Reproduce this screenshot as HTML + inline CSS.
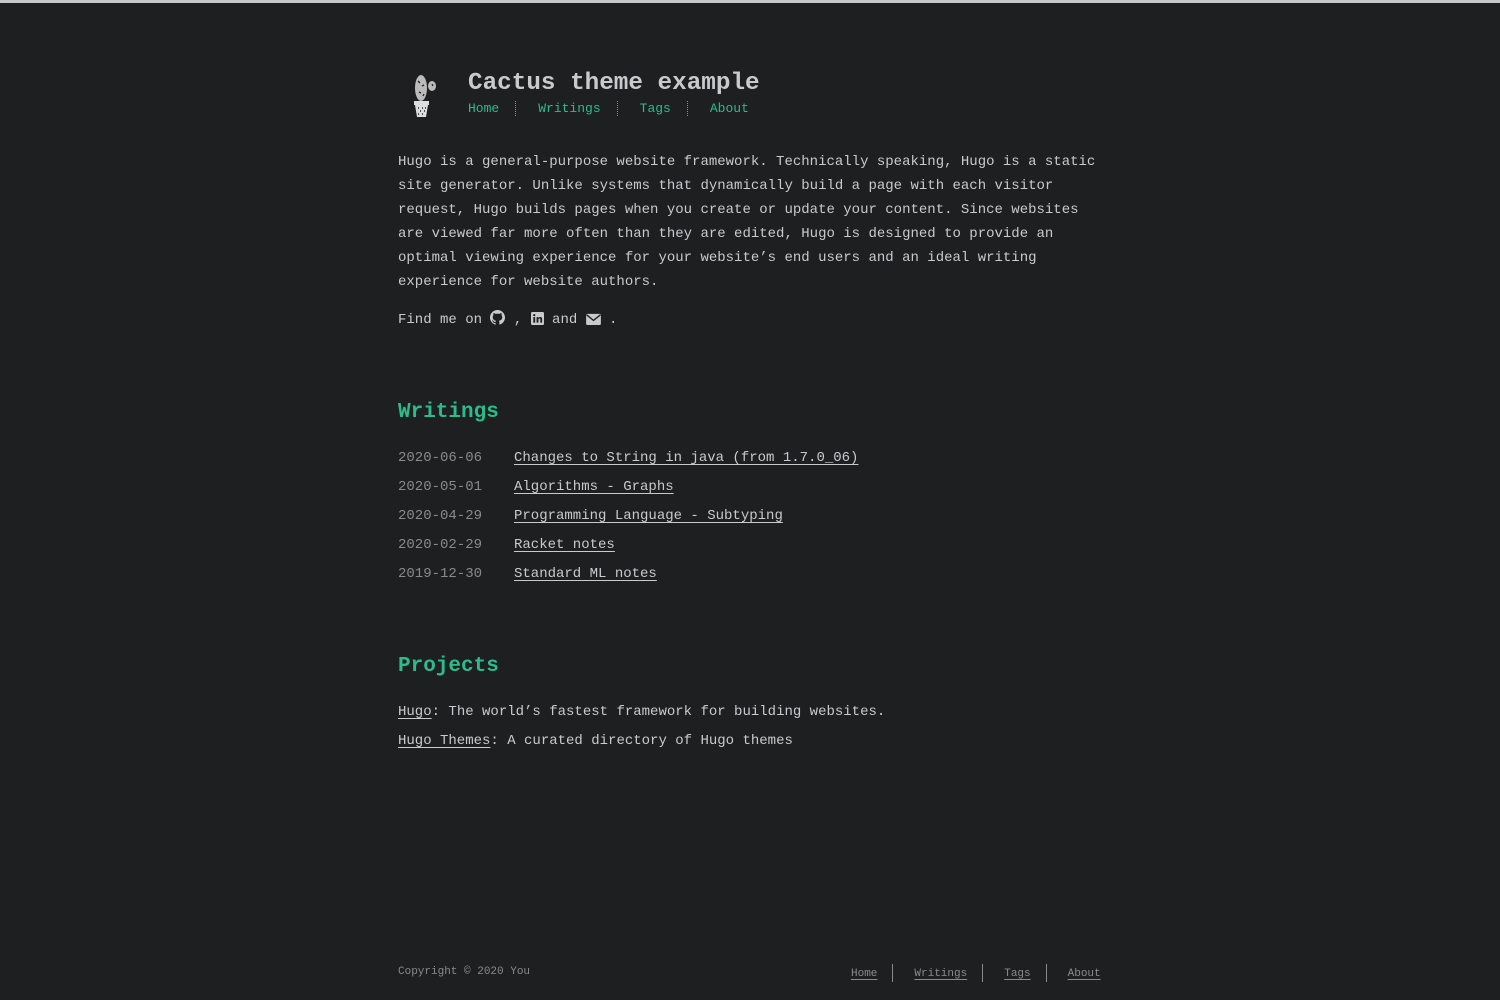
<!DOCTYPE html>
<html><head><meta charset="utf-8"><style>
*{margin:0;padding:0;box-sizing:border-box}
html,body{width:1500px;height:1000px;background:#1d1f21;overflow:hidden}
body{font-family:"Liberation Mono",monospace;color:#c9cacc;font-size:14px;position:relative;border-top:3px solid #c8c8c8}
a{color:#c9cacc;text-decoration:underline;text-underline-offset:3px}
.abs{position:absolute}
.title{left:468px;top:65px;font-size:24.3px;font-weight:bold;color:#c9cacc;line-height:32px}
.nav{left:468px;top:96px;font-size:13px;color:#2bbc8a;line-height:20px;white-space:pre}
.nav span.sep{display:inline-block;border-left:1px dotted #2bbc8a;height:15px;vertical-align:middle;margin:0 22px 0 16px}
.intro{left:398px;top:147px;width:705px;line-height:24px}
.find{left:398px;top:305px;line-height:24px}
h2{position:absolute;left:398px;font-size:21px;font-weight:bold;color:#2bbc8a;line-height:30px}
.list{left:398px;top:441px;line-height:29px}
.list .d{display:inline-block;width:116px;color:#8a8a8a}
.proj{left:398px;top:695px;line-height:29px}
.foot{font-size:11px;color:#8a8a8a}
.foot a{color:#8a8a8a}
.fnav span{display:inline-block;border-left:1px solid #8a8a8a;height:18px;vertical-align:middle;margin:0 21px 0 15px}
svg{vertical-align:-2px}
</style></head><body>
<svg class="abs" style="left:410px;top:68px" width="30" height="48" viewBox="0 0 30 48">
<ellipse cx="11" cy="17" rx="6" ry="13" fill="#bbb"/>
<ellipse cx="22" cy="15" rx="4" ry="5" fill="#bbb"/>
<path d="M8 10l2 2M12 15l2-1M9 21l2 1M13 25l1-2M22 13l1 2" stroke="#222" stroke-width="1.3"/>
<rect x="4" y="30" width="15" height="4" fill="#ddd"/>
<path d="M5 34h13l-2 12H7z" fill="#ddd"/>
<path d="M8 37h1M12 37h1M15 37h1M10 40h1M14 40h1M8 43h1M12 43h1" stroke="#222" stroke-width="1.5"/>
</svg>
<div class="abs title">Cactus theme example</div>
<div class="abs nav">Home<span class="sep"></span>Writings<span class="sep"></span>Tags<span class="sep"></span>About</div>
<div class="abs intro">Hugo is a general-purpose website framework. Technically speaking, Hugo is a static site generator. Unlike systems that dynamically build a page with each visitor request, Hugo builds pages when you create or update your content. Since websites are viewed far more often than they are edited, Hugo is designed to provide an optimal viewing experience for your website’s end users and an ideal writing experience for website authors.</div>
<div class="abs find">Find me on <svg width="15" height="15" viewBox="0 0 16 16"><path fill="#c9cacc" d="M8 0C3.6 0 0 3.6 0 8c0 3.5 2.3 6.5 5.5 7.6.4.1.5-.2.5-.4v-1.4c-2.2.5-2.7-1-2.7-1-.4-.9-.9-1.2-.9-1.2-.7-.5.1-.5.1-.5.8.1 1.2.8 1.2.8.7 1.2 1.900.9 2.3.7.1-.5.3-.9.5-1.1-1.8-.2-3.6-.9-3.6-4 0-.9.3-1.6.8-2.1-.1-.2-.4-1 .1-2.1 0 0 .7-.2 2.2.8.6-.2 1.3-.3 2-.3s1.4.1 2 .3c1.5-1 2.2-.8 2.2-.8.4 1.1.2 1.9.1 2.1.5.6.8 1.3.8 2.1 0 3.1-1.900 3.7-3.6 3.9.3.3.5.8.5 1.5v2.2c0 .2.1.5.6.4C13.7 14.5 16 11.5 16 8c0-4.4-3.6-8-8-8z"/></svg> , <svg width="13" height="13" viewBox="0 0 14 14"><rect width="14" height="14" rx="1.5" fill="#c9cacc"/><rect x="2.5" y="5.5" width="2" height="6" fill="#1d1f21"/><circle cx="3.5" cy="3.3" r="1.2" fill="#1d1f21"/><path d="M6 5.5h2v1c.5-.8 1.3-1.1 2-1.1 1.4 0 2 .9 2 2.5v3.6h-2V8.2c0-.8-.2-1.2-.9-1.2-.7 0-1.1.5-1.1 1.3v3.2H6z" fill="#1d1f21"/></svg> and <svg width="15" height="12" viewBox="0 0 16 13"><rect y="1" width="16" height="12" rx="1.5" fill="#c9cacc"/><path d="M0.5 2l7.5 6 7.5-6" stroke="#1d1f21" stroke-width="1.5" fill="none"/></svg> .</div>
<h2 style="top:395px">Writings</h2>
<div class="abs list">
<div><span class="d">2020-06-06</span><a>Changes to String in java (from 1.7.0_06)</a></div>
<div><span class="d">2020-05-01</span><a>Algorithms - Graphs</a></div>
<div><span class="d">2020-04-29</span><a>Programming Language - Subtyping</a></div>
<div><span class="d">2020-02-29</span><a>Racket notes</a></div>
<div><span class="d">2019-12-30</span><a>Standard ML notes</a></div>
</div>
<h2 style="top:649px">Projects</h2>
<div class="abs proj">
<div><a>Hugo</a>: The world’s fastest framework for building websites.</div>
<div><a>Hugo Themes</a>: A curated directory of Hugo themes</div>
</div>
<div class="abs foot" style="left:398px;top:963px">Copyright © 2020 You</div>
<div class="abs foot fnav" style="left:851px;top:961px"><a>Home</a><span></span><a>Writings</a><span></span><a>Tags</a><span></span><a>About</a></div>
</body></html>
